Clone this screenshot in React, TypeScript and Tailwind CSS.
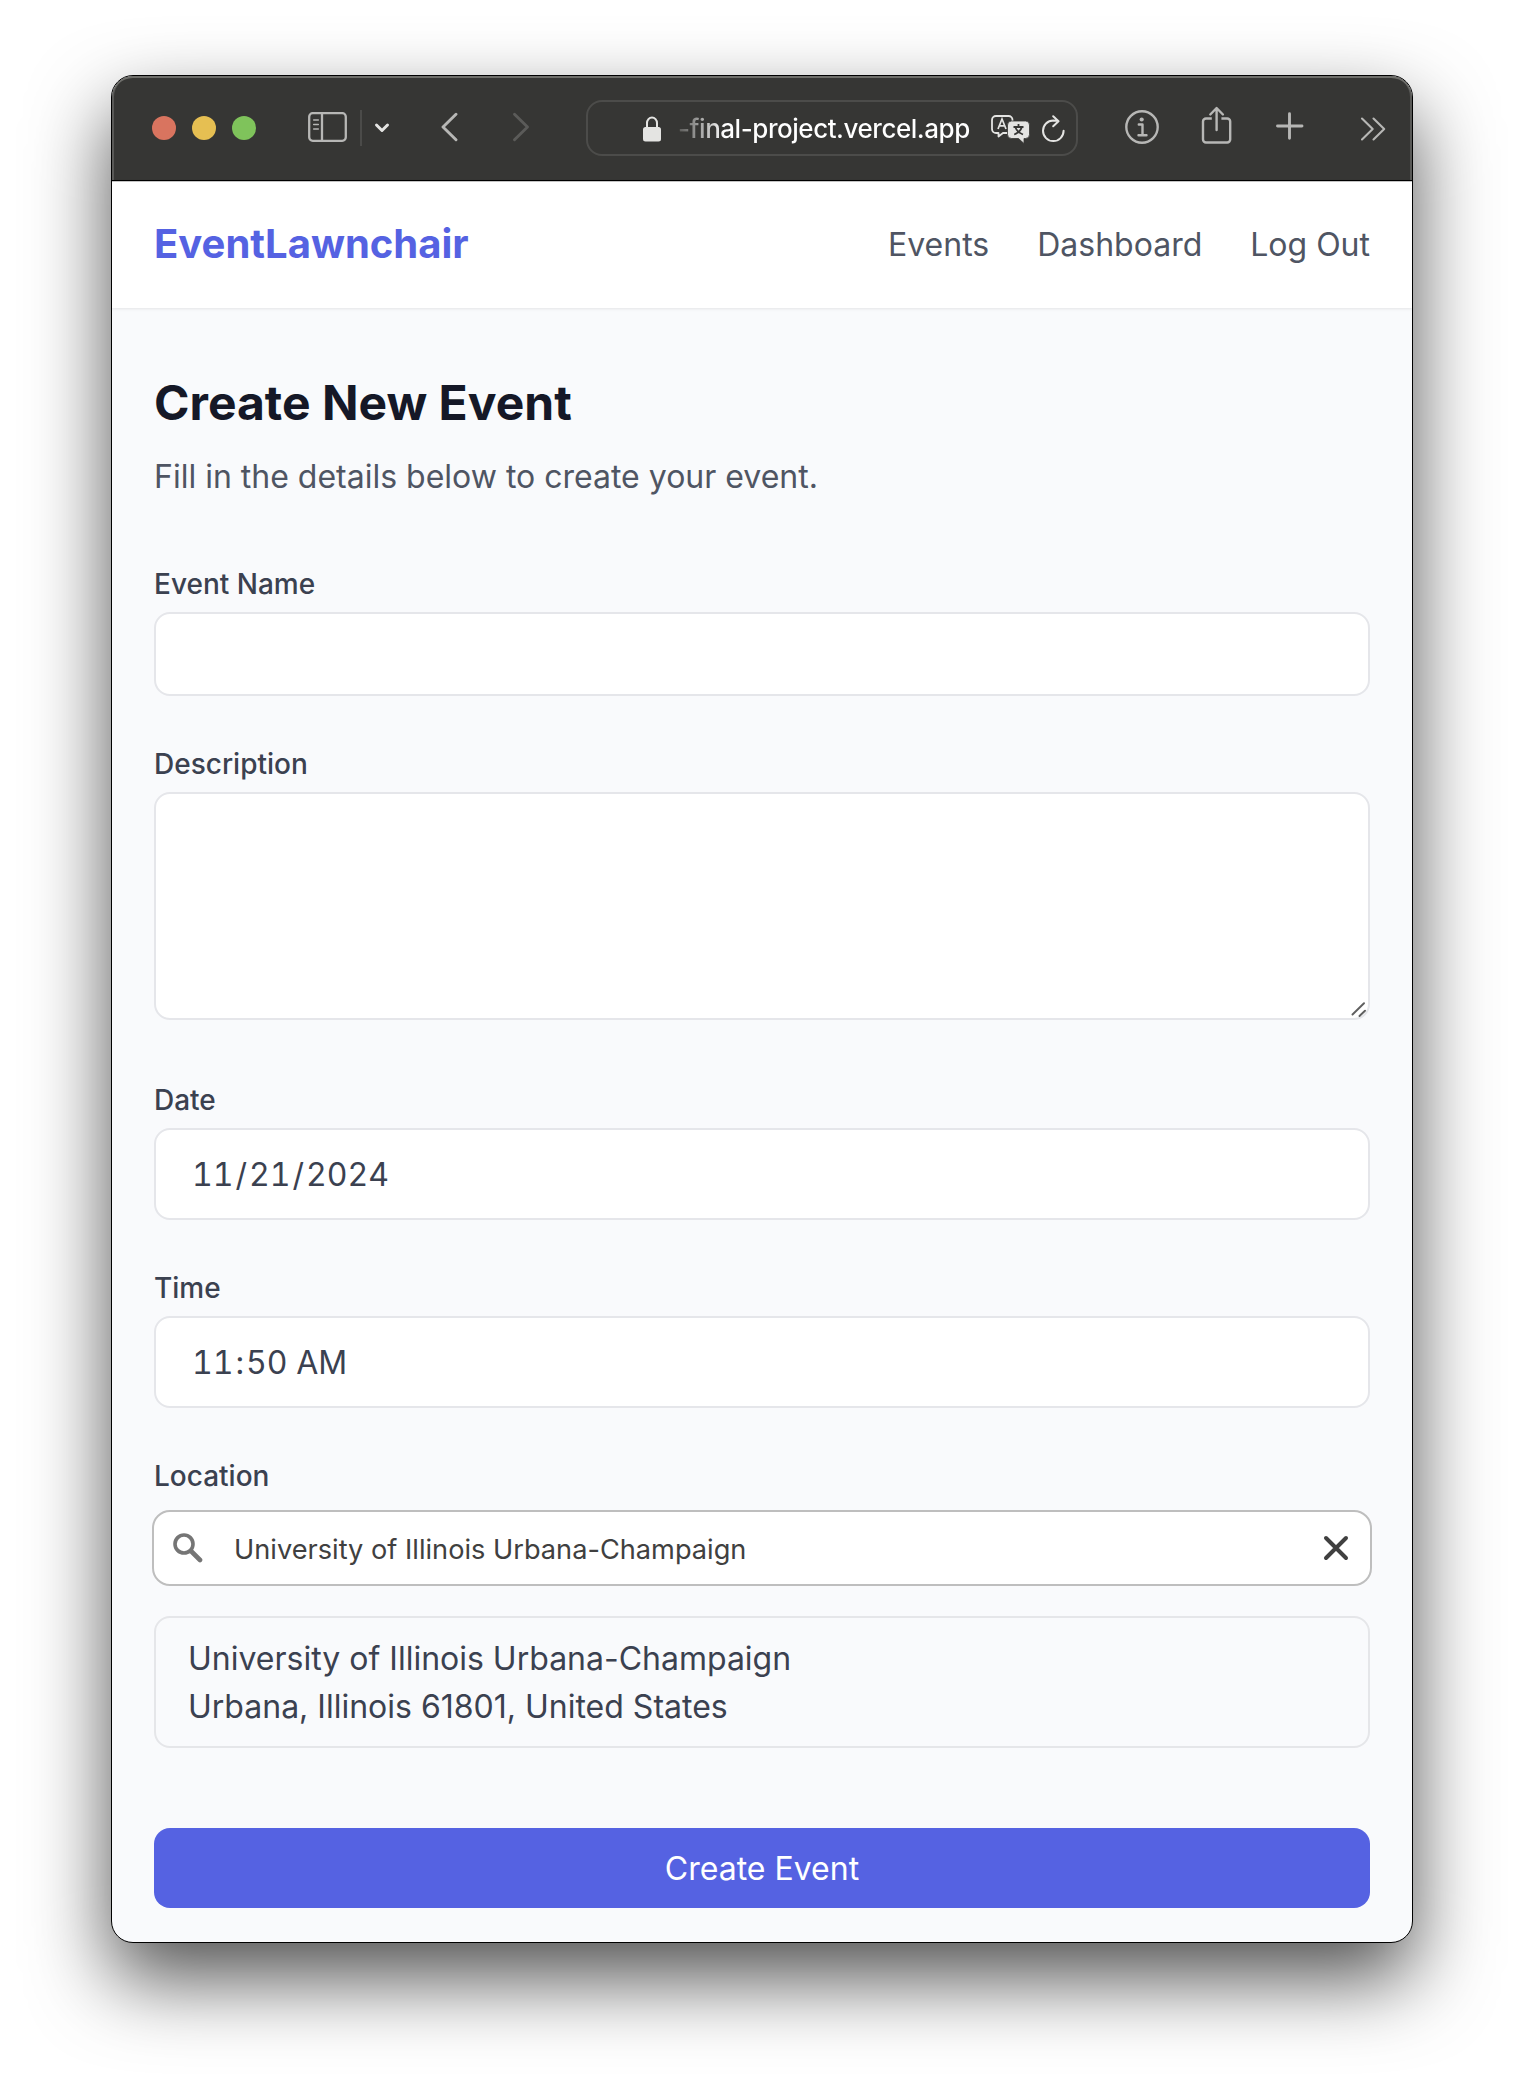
import React from "react";

function Toolbar() {
  return (
    <div className="flex h-[105px] items-center rounded-t-[21px] border-b border-black bg-[#363634] shadow-[inset_0_2px_0_#6e6e6a,inset_2px_0_0_#595957,inset_-2px_0_0_#595957]">
      <div className="ml-10 flex gap-4">
        <span className="size-6 rounded-full bg-[#d9745f]" />
        <span className="size-6 rounded-full bg-[#e6bf52]" />
        <span className="size-6 rounded-full bg-[#7fc35b]" />
      </div>
      <svg className="ml-[52px] h-[30px] w-[39px] -translate-y-px" viewBox="0 0 39 30" fill="none" stroke="#b7b7b5" strokeWidth="2.300">
        <rect x="1.200" y="1.200" width="36.600" height="27.600" rx="3.500" />
        <path d="M14 1v28" />
        <path d="M5.700 8h4.600M5.700 12.500h4.600M5.700 17h4.600" strokeWidth="1.500" strokeLinecap="round" />
      </svg>
      <span className="ml-[13px] h-9 w-0.5 bg-[#4b4b49]" />
      <svg className="ml-3 h-[12px] w-[16px]" viewBox="0 0 16 12" fill="none" stroke="#e4e4e2" strokeWidth="3" strokeLinecap="round" strokeLinejoin="round">
        <path d="M2.500 3l5.500 5.500L13.500 3" />
      </svg>
      <svg className="ml-[50px] h-[30px] w-[18px] -translate-y-px" viewBox="0 0 18 30" fill="none" stroke="#b7b7b5" strokeWidth="2.900" strokeLinecap="round" strokeLinejoin="round">
        <path d="M16 2.200L3 15l13 12.800" />
      </svg>
      <svg className="ml-[54px] h-[30px] w-[18px] -translate-y-px" viewBox="0 0 18 30" fill="none" stroke="#5b5b59" strokeWidth="2.900" strokeLinecap="round" strokeLinejoin="round">
        <path d="M2.500 2.200l13 12.800l-13 12.800" />
      </svg>
      <div className="ml-[56px] flex h-14 w-[492px] shrink-0 items-center rounded-2xl border-2 border-[#4c4c4a]">
        <svg className="ml-[55px] h-[26px] w-[18px] shrink-0 translate-y-px" viewBox="0 0 18 26">
          <path d="M4 12V7a5 5.500 0 0 1 10 0v5" fill="none" stroke="#e4e4e2" strokeWidth="2" />
          <rect y="11" width="18" height="14.500" rx="2.500" fill="#e4e4e2" />
        </svg>
        <span className="ml-[17px] w-[292px] shrink-0 whitespace-nowrap bg-gradient-to-r from-[#5a5a58] from-0% to-white to-16% bg-clip-text pt-px text-[26px] font-medium tracking-[-0.460px] text-transparent">
          -final-project.vercel.app
        </span>
        <svg className="ml-[21px] h-[29px] w-[39px] shrink-0 translate-y-px" viewBox="0 0 39 29">
          <path d="M5 1h12.500a4 4 0 0 1 4 4v9a4 4 0 0 1-4 4H12l-4.500 3.500V18H5a4 4 0 0 1-4-4V5a4 4 0 0 1 4-4z" fill="none" stroke="#e4e4e2" strokeWidth="1.800" strokeLinejoin="round" />
          <path d="M7 14L11 4l4 10M8.300 10.800h5.400" fill="none" stroke="#e4e4e2" strokeWidth="1.700" />
          <path d="M20.500 6h14a4 4 0 0 1 4 4v9.500a4 4 0 0 1-4 4h-1.500v5L27.500 23.500h-7a4 4 0 0 1-4-4V10a4 4 0 0 1 4-4z" fill="#e4e4e2" stroke="#363634" strokeWidth="0.800" />
          <path d="M22.500 12h10M27.500 9v3M24.500 12.500c1 3 3.500 5.500 7.500 7M30.700 12.500c-1 3-3.500 5.500-7.500 7" fill="none" stroke="#363634" strokeWidth="1.800" />
        </svg>
        <svg className="ml-[12px] h-[28px] w-[23px] shrink-0 translate-y-px" viewBox="0 0 23 28" fill="none" stroke="#e4e4e2" strokeWidth="2" strokeLinecap="round" strokeLinejoin="round">
          <path d="M21.600 15.800A10.300 10.300 0 1 1 11.300 5.500L16 5.900M11.200 1.200L16.500 6.200l-5.300 5" />
        </svg>
      </div>
      <svg className="ml-[47px] size-[34px] -translate-y-px" viewBox="0 0 34 34" fill="none" stroke="#b7b7b5" strokeWidth="2.400" strokeLinecap="round" strokeLinejoin="round">
        <circle cx="17" cy="17" r="15.700" />
        <circle cx="16.700" cy="9.500" r="2.100" fill="#b7b7b5" stroke="none" />
        <path d="M13.800 14.500h3.700v10.800M13.500 25.300h8" />
      </svg>
      <svg className="ml-[42px] h-[38px] w-[32px] -translate-y-[3px]" viewBox="0 0 32 38" fill="none" stroke="#b7b7b5" strokeWidth="2.400" strokeLinecap="butt" strokeLinejoin="round">
        <path d="M10.800 12.500H5A3 3 0 0 0 2 15.500v18a3 3 0 0 0 3 3h21.200a3 3 0 0 0 3-3v-18a3 3 0 0 0-3-3h-5.800" />
        <path d="M15.600 24V2.500M9.300 8.500L15.600 2l6.300 6.500" strokeLinecap="round" />
      </svg>
      <svg className="ml-[43px] size-[28px] -translate-y-0.5" viewBox="0 0 28 28" stroke="#b7b7b5" strokeWidth="2.900" strokeLinecap="round">
        <path d="M13.500 1.700v24.600M1.500 14h24.500" />
      </svg>
      <svg className="ml-[56px] h-6 w-[26px] translate-y-px" viewBox="0 0 26 24" fill="none" stroke="#b7b7b5" strokeWidth="2.100" strokeLinecap="round" strokeLinejoin="round">
        <path d="M2 1.500L12.700 12L2 22.500M13.500 1.500L24.200 12L13.500 22.500" />
      </svg>
    </div>
  );
}

function Field({ label, children }: { label: string; children: React.ReactNode }) {
  return (
    <div>
      <label className="mb-2 block text-[28px] font-medium leading-10">{label}</label>
      {children}
    </div>
  );
}

export default function App() {
  return (
    <div className="h-[2090px] w-[1524px] overflow-hidden bg-white pl-[111px] pt-[75px] font-['Inter',sans-serif]">
      <div className="flex h-[1868px] w-[1302px] flex-col overflow-hidden rounded-[22px] border border-black bg-[#f9fafc] text-[#3b4150] shadow-[0_36px_80px_rgba(0,0,0,0.68)]">
        <Toolbar />
        <header className="flex h-[127px] shrink-0 items-center justify-between border-t border-[#c4c4c4] bg-white px-[42px] shadow-[0_1px_3px_rgba(0,0,0,0.09)]">
          <span className="pb-0.5 text-[40px] font-bold text-[#5562e2]">EventLawnchair</span>
          <nav className="flex gap-12 text-[32px] text-[#4f5563]">
            <span>Events</span>
            <span>Dashboard</span>
            <span>Log Out</span>
          </nav>
        </header>
        <main className="px-[42px] pt-[63px]">
          <h1 className="text-[48px] font-bold leading-[64px] text-[#151827]">Create New Event</h1>
          <p className="mt-[18px] text-[32px] leading-[48px] text-[#4f5563]">Fill in the details below to create your event.</p>
          <form className="mt-[63px] flex flex-col gap-12">
            <Field label="Event Name">
              <div className="h-[84px] rounded-2xl border-2 border-[#e5e6ea] bg-white" />
            </Field>
            <Field label="Description">
              <div className="mb-3 flex h-[228px] items-end justify-end rounded-2xl border-2 border-[#e5e6ea] bg-white pb-px pr-0.5">
                <svg className="size-[15px]" viewBox="0 0 15 15" stroke="#5f5f5f" strokeWidth="1.900" strokeLinecap="round">
                  <path d="M1.500 12.500L13 1.200M8.500 14L14 8.700" />
                </svg>
              </div>
            </Field>
            <Field label="Date">
              <div className="flex h-[92px] items-center whitespace-pre rounded-2xl border-2 border-[#e5e6ea] bg-white pl-[34px] pt-0.5 text-[32px] tabular-nums">
                <span className="px-0.5">11</span>/<span className="px-0.5">21</span>/<span className="px-0.5">2024</span>
              </div>
            </Field>
            <Field label="Time">
              <div className="flex h-[92px] items-center whitespace-pre rounded-2xl border-2 border-[#e5e6ea] bg-white pl-[34px] pt-0.5 text-[32px] tabular-nums">
                <span className="px-0.5">11</span>:<span className="pl-0.5">50</span>
                <span> AM</span>
              </div>
            </Field>
            <Field label="Location">
              <div className="-mx-0.5 mt-[14px] flex h-[76px] items-center rounded-[18px] border-2 border-[#bebebe] bg-white text-[#404040]">
                <svg className="ml-[19px] size-[30px]" viewBox="0 0 30 30" fill="none" stroke="#757575" strokeLinecap="round">
                  <circle cx="11" cy="11" r="9" strokeWidth="3.600" />
                  <path d="M18.500 18.500L27 27" strokeWidth="4.600" />
                </svg>
                <span className="ml-[31px] pt-1 text-[27.200px]">University of Illinois Urbana-Champaign</span>
                <svg className="ml-auto mr-[21px] size-[26px]" viewBox="0 0 26 26" stroke="#404040" strokeWidth="4" strokeLinecap="round">
                  <path d="M3 3l20 20M23 3L3 23" />
                </svg>
              </div>
              <div className="mt-[30px] h-[132px] rounded-2xl border-2 border-[#e5e6e9] px-8 pt-[17px] text-[32px] leading-[48px]">
                University of Illinois Urbana-Champaign
                <br />
                Urbana, Illinois 61801, United States
              </div>
            </Field>
            <button type="button" className="mt-8 h-20 rounded-2xl bg-[#5562e2] pt-0.5 text-[32px] text-white">
              Create Event
            </button>
          </form>
        </main>
      </div>
    </div>
  );
}
